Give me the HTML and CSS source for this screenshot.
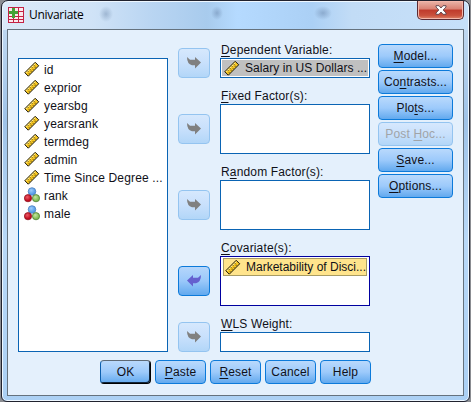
FILE: index.html
```html
<!DOCTYPE html>
<html lang="en">
<head>
<meta charset="utf-8">
<title>Univariate</title>
<link rel="stylesheet" href="styles.css">
</head>
<body>
<svg class="defs" aria-hidden="true">
  <defs>
    <radialGradient id="blue" cx=".4" cy=".35"><stop offset="0" stop-color="#9ccbfb"/><stop offset="1" stop-color="#5a9ee6"/></radialGradient>
    <radialGradient id="red" cx=".4" cy=".35"><stop offset="0" stop-color="#ee5a66"/><stop offset="1" stop-color="#c00c20"/></radialGradient>
    <radialGradient id="green" cx=".4" cy=".35"><stop offset="0" stop-color="#c5e6a0"/><stop offset="1" stop-color="#84bd55"/></radialGradient>
    <symbol id="scale" viewBox="0 0 16 16">
      <path d="M.8 11.7 11.2 1.3 14.7 4.8 4.3 15.2Z" fill="#f9c823" stroke="#16140c"/>
      <path d="M2.1 11.7 11.3 2.6" stroke="#fff3a8" fill="none"/>
      <path d="M3.8 10.2l.9.9M5.8 8.2l1.2 1.2M7.8 6.2l.9.9M9.8 4.2l1.2 1.2M5.6 13l-.8-.8M7.6 11l-.8-.8M9.6 9l-.8-.8M11.6 7l-.8-.8" stroke="#5b4a10" fill="none"/>
    </symbol>
    <symbol id="nominal" viewBox="0 0 16 16">
      <circle cx="8" cy="4.5" r="3.8" fill="url(#blue)" stroke="#4a7fc0" stroke-width=".8"/>
      <circle cx="4" cy="11.2" r="3.6" fill="url(#red)" stroke="#8f1420" stroke-width=".8"/>
      <circle cx="12" cy="11.2" r="3.6" fill="url(#green)" stroke="#4e7d32" stroke-width=".8"/>
    </symbol>
    <symbol id="arrow" viewBox="0 0 14 12">
      <path d="M0 0 3 2.7H8V0L14 5.5 8 11.5V8.2H5Q0 7 0 0Z"/>
    </symbol>
  </defs>
</svg>
<div class="window">
  <header class="titlebar">
    <svg class="app" width="16" height="16" viewBox="0 0 16 16">
      <path fill="#c42345" d="M0 0h16v16H0z"/>
      <path fill="#fbe9ed" d="M1 1h4v3H1zM6 1h4v3H6zM11 1h4v3h-4zM1 5h4v4H1zM6 5h4v4H6zM11 5h4v4h-4zM1 10h4v2H1zM6 10h4v2H6zM11 10h4v2h-4zM1 13h4v2H1zM6 13h4v2H6zM11 13h4v2h-4z"/>
      <path fill="#43a336" d="M4 1h3v3h3v3H7v4H4V7H1V4h3z"/>
    </svg>
    <span class="title">Univariate</span>
    <span class="close"><svg width="12" height="10" viewBox="0 0 12 10"><path d="M1 .7H4L6 3 8 .7H11V2L8.2 5 11 8V9.3H8L6 7 4 9.3H1V8L3.8 5 1 2Z" fill="#fff" stroke="#5a424a" stroke-width=".9"/></svg></span>
  </header>
  <main class="client">
    <div class="columns">
      <ul class="list">
        <li><svg><use href="#scale"/></svg>id</li>
        <li><svg><use href="#scale"/></svg>exprior</li>
        <li><svg><use href="#scale"/></svg>yearsbg</li>
        <li><svg><use href="#scale"/></svg>yearsrank</li>
        <li><svg><use href="#scale"/></svg>termdeg</li>
        <li><svg><use href="#scale"/></svg>admin</li>
        <li><svg><use href="#scale"/></svg>Time Since Degree ...</li>
        <li><svg><use href="#nominal"/></svg>rank</li>
        <li><svg><use href="#nominal"/></svg>male</li>
      </ul>
      <div class="targets">
        <section class="target single"><button class="move off"><svg><use href="#arrow"/></svg></button><div class="field"><label><u>D</u>ependent Variable:</label><div class="box"><div class="chosen"><svg><use href="#scale"/></svg>Salary in US Dollars ...</div></div></div></section>
        <section class="target multi"><button class="move off"><svg><use href="#arrow"/></svg></button><div class="field"><label><u>F</u>ixed Factor(s):</label><div class="box"></div></div></section>
        <section class="target multi"><button class="move off"><svg><use href="#arrow"/></svg></button><div class="field"><label>R<u>a</u>ndom Factor(s):</label><div class="box"></div></div></section>
        <section class="target multi"><button class="move back"><svg><use href="#arrow"/></svg></button><div class="field"><label><u>C</u>ovariate(s):</label><div class="box focus"><div class="chosen active"><svg><use href="#scale"/></svg>Marketability of Disci...</div></div></div></section>
        <section class="target single"><button class="move off"><svg><use href="#arrow"/></svg></button><div class="field"><label><u>W</u>LS Weight:</label><div class="box"></div></div></section>
      </div>
      <nav class="options">
        <button class="btn"><span><u>M</u>odel...</span></button>
        <button class="btn"><span>Co<u>n</u>trasts...</span></button>
        <button class="btn"><span>Plo<u>t</u>s...</span></button>
        <button class="btn off"><span>Post <u>H</u>oc...</span></button>
        <button class="btn"><span><u>S</u>ave...</span></button>
        <button class="btn"><span><u>O</u>ptions...</span></button>
      </nav>
    </div>
    <footer class="actions">
      <button class="btn default"><span>OK</span></button>
      <button class="btn"><span><u>P</u>aste</span></button>
      <button class="btn"><span><u>R</u>eset</span></button>
      <button class="btn"><span>Cancel</span></button>
      <button class="btn"><span>Help</span></button>
    </footer>
  </main>
</div>
</body>
</html>
```

FILE: styles.css
```css
* { box-sizing: border-box; }
body {
  margin: 0;
  width: 471px;
  height: 402px;
  overflow: hidden;
  background: #8b8d92;
  font: 12px/16px "Liberation Sans", Arial, sans-serif;
  letter-spacing: .15px;
  color: #101018;
}
.defs { position: absolute; width: 0; height: 0; }
.window {
  width: 469px;
  height: 402px;
  margin-left: 1px;
  padding: 0 5px 5px;
  border: 1px solid #20222e;
  border-radius: 7px 7px 6px 6px;
  box-shadow: inset 0 0 0 1px #eef7ff;
  background:
    radial-gradient(ellipse 7px 8px at 104px 13px, #7d98b890, transparent),
    radial-gradient(ellipse 6px 7px at 215px 12px, #7593b8a0, transparent),
    radial-gradient(ellipse 9px 7px at 321px 12px, #7593b8a0, transparent),
    linear-gradient(90deg, #dbe9f8 0, #d0e3f7 90px, #b9d5f2 150px, #a8cbed 205px, #b5daff 235px, #abd0f5 310px, #c2dcf6 350px, #c6e0f9 460px) 0 0 / 100% 29px no-repeat,
    linear-gradient(#c9def3, #9fc3e8 30%, #b9d9f8 60%, #abd0f4);
}
.titlebar { display: flex; height: 28px; padding-left: 1px; }
.app { margin-top: 6px; }
.title {
  flex: 1;
  margin: 5px 0 0 5px;
  font: 12px/18px "Open Sans", "Noto Sans", sans-serif;
  letter-spacing: -.3px;
  color: #000;
}
.close {
  display: flex;
  align-items: center;
  justify-content: center;
  width: 47px;
  height: 19px;
  border: 1px solid #5a2b33;
  border-top: 0;
  border-radius: 0 0 5px 5px;
  box-shadow: inset 0 0 0 1px #f3b7ab;
  background: linear-gradient(#eab5a9, #d98172 45%, #bf3a2b 50%, #c9503c 80%, #dd8468);
}
.client {
  width: 457px;
  height: 367px;
  padding: 14px 9px 10px 10px;
  border: 1px solid #65727e;
  background: #e4f0fc;
}
.columns { display: flex; height: 308px; }
.list {
  width: 150px;
  height: 294px;
  margin: 14px 10px 0 0;
  padding: 2px 0 0 5px;
  border: 1px solid #0a64b4;
  background: #fff;
  list-style: none;
}
.list li { display: flex; align-items: center; height: 18px; white-space: nowrap; }
.list svg { width: 16px; height: 16px; margin: -2px 4px 0 0; flex: none; }
.targets { display: flex; flex-direction: column; gap: 10px; width: 192px; }
.target { display: flex; gap: 10px; align-items: flex-end; height: 66px; }
.target.single { height: 36px; }
.target.single:first-child { height: 34px; }
.target.multi .move { margin-bottom: 10px; }
.move {
  display: flex;
  align-items: center;
  justify-content: center;
  width: 32px;
  height: 30px;
  padding: 0;
  border: 1px solid #0c7ada;
  border-radius: 4px;
  background: linear-gradient(#b5d6fb, #9ac8fa 50%, #62a9ee);
}
.move.off { border-color: #94c4f0; background: linear-gradient(#d6e8fd, #c8e0fc 50%, #b2d6f8); }
.move svg { width: 14px; height: 12px; fill: #808080; }
.move.back svg { transform: scaleX(-1); fill: #6560cf; }
.field { width: 150px; }
.field label { display: block; height: 16px; padding-left: 1px; line-height: 17px; white-space: nowrap; }
.box { height: 50px; padding: 1px; border: 1px solid #0a64b4; background: #fff; }
.single .box { height: 20px; }
.box.focus { border-color: #0000a0; }
.chosen { display: flex; align-items: center; height: 16px; padding-left: 2px; background: #c0c0c0; letter-spacing: .06px; white-space: nowrap; }
.chosen svg { width: 16px; height: 16px; margin-right: 5px; flex: none; }
.chosen.active { height: 18px; margin: 0 1px; padding-left: 1px; border: 1px solid #a89c64; background: #ffe48c; letter-spacing: 0; }
.options { display: flex; flex-direction: column; gap: 2px; width: 75px; margin-left: 8px; }
.btn {
  height: 24px;
  padding: 0 0 1px;
  border: 1px solid #0c7ada;
  border-radius: 4px;
  background: linear-gradient(#b9d9fc, #9dcafb 50%, #62a9ee);
  font: inherit;
  letter-spacing: inherit;
  color: inherit;
  white-space: nowrap;
}
.btn.off { border-color: #94c4f0; background: linear-gradient(#d6e8fd, #c8e0fc 50%, #b2d6f8); color: #a0a4a8; }
.btn.default { border-color: #5e6a76 #000 #000 #0c5fae; box-shadow: inset -1px -1px 0 #10243a; }
.actions { display: flex; gap: 4px; margin: 8px 0 0 82px; }
.actions .btn { width: 51px; }
u { text-decoration: underline 1px; text-underline-offset: 2px; text-decoration-skip-ink: none; }
```
